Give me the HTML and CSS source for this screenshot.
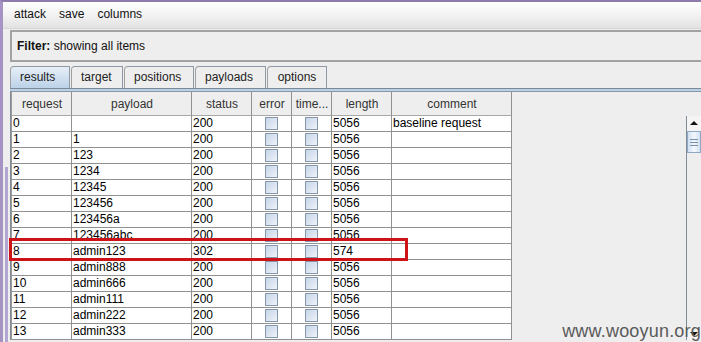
FILE: index.html
```html
<!DOCTYPE html>
<html lang="en">
<head>
  <meta charset="UTF-8" />
  <title>Intruder attack - results</title>
  <link rel="stylesheet" href="styles.css">
</head>
<body>

  <div class="menubar">
    <span class="menu">attack</span>
    <span class="menu">save</span>
    <span class="menu">columns</span>
  </div>

  <div class="frame">
    <div class="gutter"><div class="stripe"></div></div>

    <div class="main">
      <div class="filter"><b>Filter:</b> showing all items</div>

      <div class="tabs">
        <div class="tab active">results</div>
        <div class="tab">target</div>
        <div class="tab">positions</div>
        <div class="tab">payloads</div>
        <div class="tab">options</div>
      </div>
      <div class="tabline"></div>

      <div class="panel">
        <table class="results">
          <thead>
            <tr>
              <th class="c-req">request</th>
              <th class="c-pay">payload</th>
              <th class="c-status">status</th>
              <th class="c-err">error</th>
              <th class="c-time">time...</th>
              <th class="c-len">length</th>
              <th class="c-com">comment</th>
            </tr>
          </thead>
          <tbody id="rows"></tbody>
        </table>
        <div class="filler"></div>
        <div class="scrollbar">
          <div class="sb-btn up"></div>
          <div class="sb-thumb"><span></span><span></span><span></span></div>
          <div class="sb-track"></div>
          <div class="sb-btn down"></div>
        </div>
      </div>
    </div>
  </div>

  <!-- resaltado de la fila 302 -->
  <div class="highlight"></div>
  <div class="watermark">www.wooyun.org</div>

  <script>
    const data = [
      ['0', '', '200', '5056', 'baseline request'],
      ['1', '1', '200', '5056', ''],
      ['2', '123', '200', '5056', ''],
      ['3', '1234', '200', '5056', ''],
      ['4', '12345', '200', '5056', ''],
      ['5', '123456', '200', '5056', ''],
      ['6', '123456a', '200', '5056', ''],
      ['7', '123456abc', '200', '5056', ''],
      ['8', 'admin123', '302', '574', ''],
      ['9', 'admin888', '200', '5056', ''],
      ['10', 'admin666', '200', '5056', ''],
      ['11', 'admin111', '200', '5056', ''],
      ['12', 'admin222', '200', '5056', ''],
      ['13', 'admin333', '200', '5056', '']
    ];

    const tbody = document.getElementById('rows');
    data.forEach(r => {
      const tr = document.createElement('tr');
      tr.innerHTML =
        '<td>' + r[0] + '</td>' +
        '<td>' + r[1] + '</td>' +
        '<td>' + r[2] + '</td>' +
        '<td class="chk"><span class="box"></span></td>' +
        '<td class="chk"><span class="box"></span></td>' +
        '<td>' + r[3] + '</td>' +
        '<td>' + r[4] + '</td>';
      tbody.appendChild(tr);
    });
  </script>

</body>
</html>
```

FILE: styles.css
```css
html, body {
  margin: 0;
  height: 342px;
  overflow: hidden;
}
body {
  position: relative;
  font-family: "Liberation Sans", Arial, sans-serif;
  font-size: 12px;
  color: #000;
  background-color: #eeeeee;
  border-top: 2px solid #8e7cad;
  border-left: 3px solid #a593c4;
  box-sizing: border-box;
}
.menubar {
  height: 26px;
  line-height: 25px;
  padding-left: 11px;
  display: flex;
  gap: 13px;
  background: linear-gradient(#ffffff, #f4f4f4 45%, #e2e2e2);
  border-bottom: 1px solid #d6d6d6;
  color: #111;
}
.frame {
  display: flex;
}
.gutter {
  width: 7px;
  flex: none;
  padding-top: 138px;
  box-sizing: border-box;
}
.stripe {
  margin-left: 2px;
  width: 3px;
  height: 220px;
  background-color: #b4a6d2;
}
.main {
  flex: 1;
  min-width: 0;
}
.filter {
  margin-top: 1px;
  height: 28px;
  line-height: 28px;
  padding-left: 5px;
  border-top: 2px solid #a2a2a2;
  border-bottom: 2px solid #a2a2a2;
  border-left: 2px solid #a2a2a2;
  color: #111;
}
.filter b {
  color: #111;
}
.tabs {
  display: flex;
  margin-top: 4px;
  height: 22px;
  align-items: flex-end;
}
.tab {
  box-sizing: border-box;
  height: 22px;
  line-height: 20px;
  padding: 0 9px;
  border: 1px solid #8d99a5;
  border-bottom: none;
  border-left-color: #a0a0a0;
  border-radius: 4px 0 0 0;
  background-color: #eeeeee;
  color: #222;
  margin-right: 1px;
}
.tab:nth-child(1) { width: 60px; }
.tab:nth-child(2) { width: 52px; }
.tab:nth-child(3) { width: 70px; }
.tab:nth-child(4) { width: 71px; }
.tab:nth-child(5) { width: 60px; text-align: center; }
.tab.active {
  background: linear-gradient(#e6eef7, #bcd2e8);
}
.tabline {
  height: 2px;
  border-top: 1px solid #7d8a96;
  border-bottom: 1px solid #8a98a6;
  background-color: #b9d0e6;
}
.panel {
  display: flex;
  border-left: 1px solid #7f8c98;
  height: 248px;
}
.results {
  flex: none;
  width: 501px;
  table-layout: fixed;
  border-collapse: separate;
  border-spacing: 0;
  border-left: 1px solid #9a9a9a;
  align-self: flex-start;
}
.results th,
.results td {
  box-sizing: border-box;
  border-right: 1px solid #919191;
  border-bottom: 1px solid #919191;
  padding: 0 0 0 1px;
  white-space: nowrap;
  overflow: hidden;
}
.results th {
  height: 24px;
  font-weight: normal;
  color: #333;
  text-align: center;
  background-color: #eeeeee;
  border-bottom-color: #a8a8a8;
}
.results td {
  height: 16px;
  line-height: 15px;
  background-color: #fff;
}
.c-req { width: 60px; }
.c-pay { width: 120px; }
.c-status { width: 60px; }
.c-err { width: 40px; }
.c-time { width: 40px; }
.c-len { width: 60px; }
.c-com { width: 120px; }
.results td.chk {
  text-align: center;
  padding: 0;
}
.box {
  display: inline-block;
  width: 13px;
  height: 13px;
  box-sizing: border-box;
  margin-top: 1px;
  vertical-align: top;
  border: 1px solid #8797ab;
  background: linear-gradient(135deg, #c6d6e8, #eef3f9);
}
.filler {
  flex: 1;
}
.scrollbar {
  flex: none;
  width: 14px;
  margin-top: 24px;
  border-left: 1px solid #7f8c98;
  display: flex;
  flex-direction: column;
}
.sb-btn {
  height: 15px;
  flex: none;
  background-color: #f4f4f4;
  position: relative;
}
.sb-btn.up::after {
  content: "";
  position: absolute;
  left: 3px;
  top: 5px;
  border-left: 4px solid transparent;
  border-right: 4px solid transparent;
  border-bottom: 4px solid #111;
}
.sb-btn.down {
  height: 12px;
}
.sb-btn.down::after {
  content: "";
  position: absolute;
  left: 3px;
  top: 4px;
  border-left: 4px solid transparent;
  border-right: 4px solid transparent;
  border-top: 4px solid #111;
}
.sb-thumb {
  height: 22px;
  flex: none;
  box-sizing: border-box;
  border: 1px solid #90a8c4;
  background: linear-gradient(90deg, #cfe0f2, #f4f8fc 50%, #cfe0f2);
  display: flex;
  flex-direction: column;
  justify-content: center;
  gap: 2px;
  padding-left: 2px;
}
.sb-thumb span {
  display: block;
  width: 8px;
  height: 1px;
  background-color: #7890a8;
}
.sb-track {
  flex: 1;
  background-color: #eeeeee;
}
.highlight {
  position: absolute;
  left: 6px;
  top: 236px;
  width: 399px;
  height: 23px;
  box-sizing: border-box;
  border: 3px solid #cc1418;
}
.watermark {
  position: absolute;
  right: 0;
  top: 318px;
  font-size: 18px;
  line-height: 22px;
  color: #5a5a5a;
  letter-spacing: 0.2px;
}
```
